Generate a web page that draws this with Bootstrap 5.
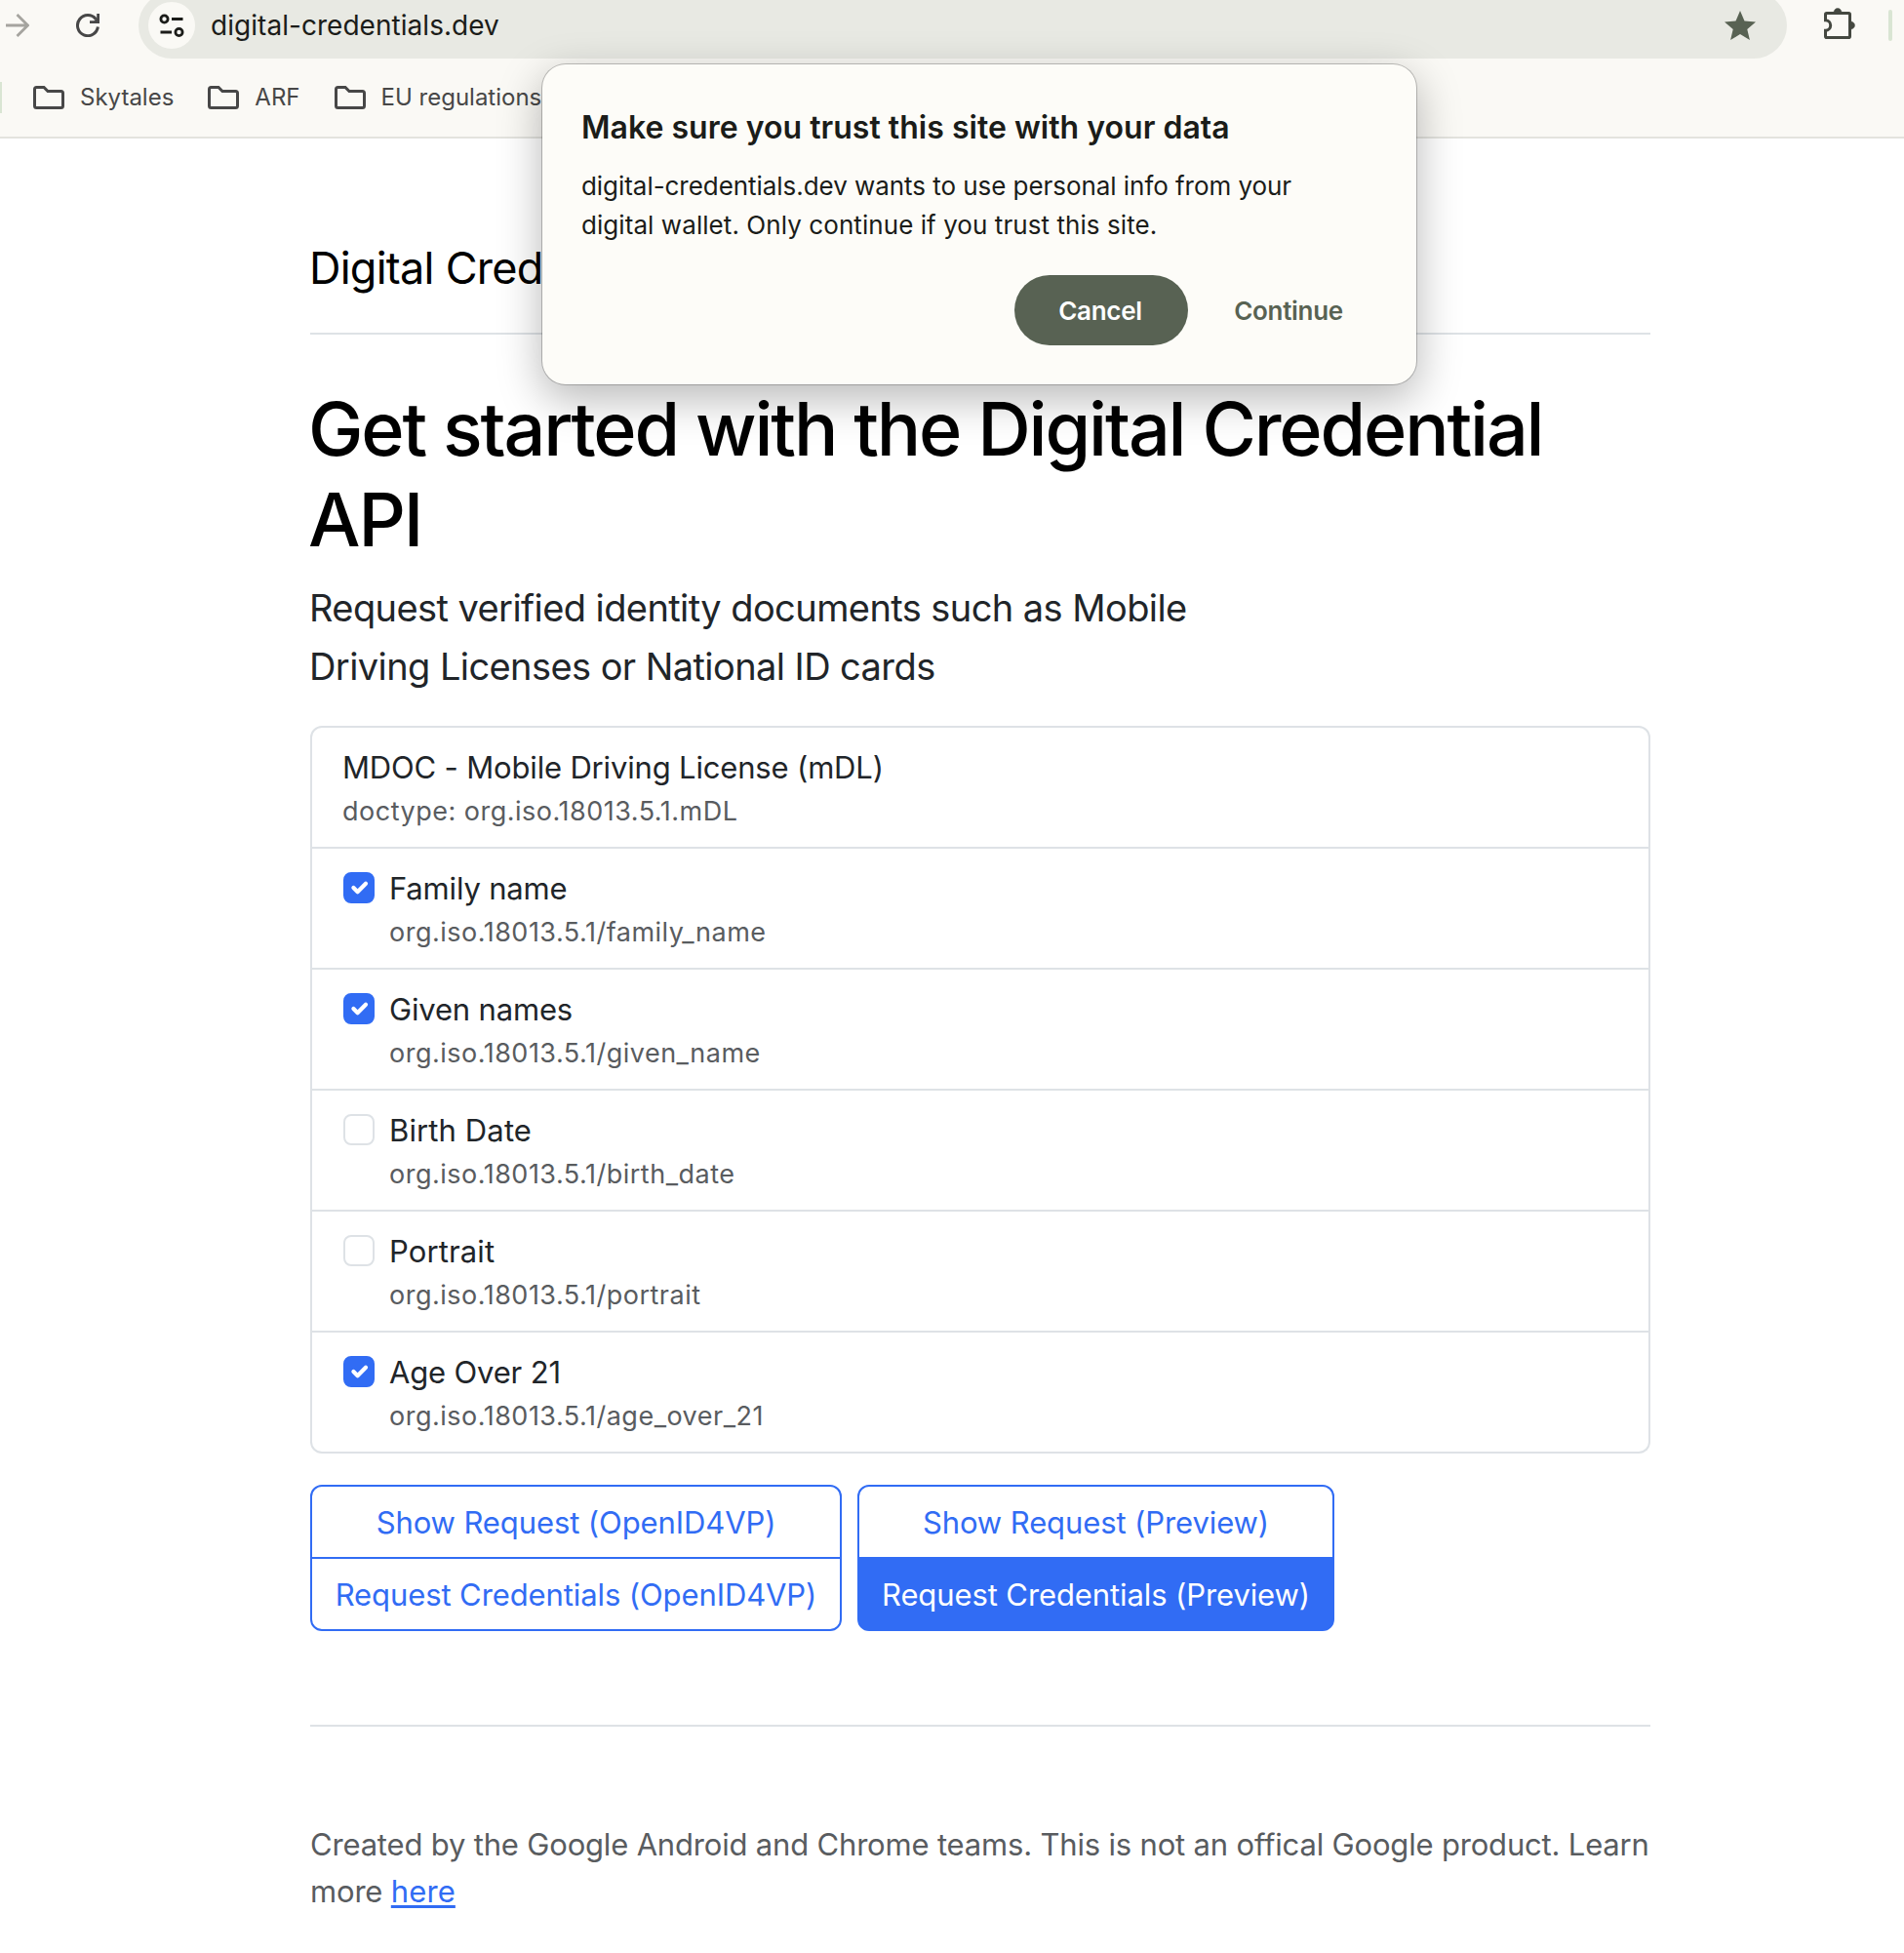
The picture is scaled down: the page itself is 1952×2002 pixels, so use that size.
<!DOCTYPE html>
<html lang="en">
<head>
<meta charset="utf-8">
<meta name="viewport" content="width=device-width, initial-scale=1">
<title>Digital Credentials</title>
<link href="https://cdn.jsdelivr.net/npm/bootstrap@5.3.0/dist/css/bootstrap.min.css" rel="stylesheet">
<style>
  /* Double-density page: one rem is 32px */
  html { font-size: 32px; }
  html, body { overflow: hidden; }
  body {
    --bs-border-width: 2px;
    --line: #dee2e6;
    --brand: #316cf4;
    --ink: #212529;
    --leaf: #586253;
    font-family: Inter, "Liberation Sans", sans-serif;
    font-size: 31px; line-height: 48px; letter-spacing: -.17px;
    color: var(--ink); background: #fff; height: 2002px;
  }
  svg { display: block; flex: none; }

  /* Browser toolbar */
  .chrome-bar { height: 142px; background: #faf9f5; border-bottom: 2px solid #e3e3de; }
  .tool-row { height: 60px; }
  .tool-row > svg:first-child { margin: 0 48px 8px 6px; }
  .tool-row > .reload { margin: 0 40px 8px 0; }
  .omnibox { width: 1690px; height: 68px; margin-top: -8px; padding: 0 32px 0 10px; background: #e8e9e3; color: #1b1c19; font-size: 28px; letter-spacing: .04px; }
  .site-info { width: 48px; height: 48px; background: #faf9f5; margin-right: 16px; }
  .ext { margin: 0 34px 12px 38px; }
  .tick { width: 4px; height: 32px; border-radius: 2px; background: #d9e5d3; margin-bottom: 8px; }
  .marks { height: 80px; font-size: 24px; letter-spacing: 0; line-height: 32px; color: #474747; }
  .marks .edge { width: 2px; height: 32px; background: #d9e5d3; margin-right: 32px; }
  .marks .fold { width: 32px; height: 24px; margin-right: 16px; }
  .mk { margin-right: 35px; }

  /* Trust prompt */
  .prompt { position: absolute; left: 556px; top: 66px; width: 896px; height: 328px; border-radius: 24px; background: #fdfcf8; color: #1b1c19;
    box-shadow: 0 0 0 1px rgba(0,0,0,.22), 0 14px 44px 2px rgba(0,0,0,.27); padding: 43px 26px 40px 40px; z-index: 10; }
  .prompt h2 { font-size: 32px; line-height: 44px; font-weight: 600; letter-spacing: .02px; margin: 0 0 18px; }
  .prompt p { font-size: 26px; line-height: 40px; letter-spacing: -.05px; margin: 0 0 31px; white-space: nowrap; }
  .prompt .l2 { letter-spacing: .07px; }
  .prompt .btn { height: 72px; font-size: 26px; border: 0; border-radius: 36px; letter-spacing: -.3px; padding: 1px 2px 0 0; font-weight: 600; }
  .btn-leaf { width: 178px; background: var(--leaf); color: #fff; }
  .prompt .btn-plain { width: 208px; color: var(--leaf); }

  /* Page */
  .page { width: 1374px; padding-top: 98px; margin-left: 318px; }
  .page-head { height: 103px; border-bottom: 2px solid var(--line); margin-bottom: 48px; color: #000; }
  .page-head span { font-size: 45px; line-height: 69px; letter-spacing: -.75px; white-space: nowrap; margin-left: -1px; }
  .hero { font-size: 75.5px; line-height: 93px; font-weight: 500; letter-spacing: -2.15px; color: #000; margin: 0 0 14px -2px; padding-top: 2px; }
  .sub { font-size: 38px; line-height: 60px; letter-spacing: -.58px; margin: 0 0 31px -1px; }
  .claims .list-group-item { color: var(--ink); border-color: var(--line); line-height: 48px; }
  .claims { border-radius: 12px; }
  .claims .list-group-item { height: 124px; }
  .claims .list-group-item:first-child { height: 126px; border-top-left-radius: 12px; border-top-right-radius: 12px; }
  .claims .list-group-item:last-child { border-bottom-left-radius: 12px; border-bottom-right-radius: 12px; }
  .claims .list-group-item + .list-group-item { border-top-width: 0; }
  .claims .name { display: block; margin-left: -1px; padding-top: 1px; }
  .claims .name.loose { letter-spacing: .12px; }
  .claims .path { display: block; font-size: 27px; line-height: 42px; letter-spacing: .5px; color: #595c5f; margin-left: -1px; }
  .claims .form-check-input { width: 32px; height: 32px; margin: 8px 0 0; border: 2px solid var(--line); border-radius: 8px; }
  .claims .form-check-input:checked { background-color: var(--brand); border-color: var(--brand); }
  .actions .btn { --bs-btn-color: var(--brand); --bs-btn-border-color: var(--brand); height: 76px; font-size: 31px; line-height: 48px; padding: 13px 0 11px; border-width: 2px; border-radius: 12px; letter-spacing: -.1px; }
  .actions .btn-primary { --bs-btn-color: #fff; --bs-btn-bg: var(--brand); }
  .actions .btn:first-child { border-bottom-left-radius: 0; border-bottom-right-radius: 0; }
  .actions .btn-group-vertical > .btn:last-child { border-top-left-radius: 0; border-top-right-radius: 0; margin-top: -2px; }
  .g-wide { width: 545px; }
  .g-slim { width: 489px; }
  .page-foot { margin-top: 96px; padding-top: 97px; border-top: 2px solid var(--line); color: #595c5f; letter-spacing: -.18px; white-space: nowrap; }
  .page-foot a { color: var(--brand); letter-spacing: .1px; text-decoration-thickness: 3px; text-underline-offset: 3px; }
</style>
</head>
<body>

<header class="chrome-bar">
  <div class="tool-row d-flex align-items-center">
    <svg width="24" height="24" viewBox="0 0 24 24" fill="none" stroke="#a5a49f" stroke-width="2.8"><path d="M0 12H22M11.500 1L22.500 12L11.500 23"/></svg>
    <svg class="reload" width="24" height="24" viewBox="0 0 24 24"><path d="M22.400 13.500A10.500 10.500 0 1 1 20.300 5.700" fill="none" stroke="#474747" stroke-width="3"/><path d="M21.200 0H24V10H14V7.200H18.500L21.200 4.500Z" fill="#474747"/></svg>
    <div class="omnibox rounded-pill d-flex align-items-center">
      <span class="site-info rounded-circle d-flex align-items-center justify-content-center">
        <svg width="26" height="24" viewBox="0 0 26 24" fill="none" stroke="#1b1c19" stroke-width="2.800"><circle cx="5.500" cy="5.500" r="3.600"/><path d="M13 5.500H24.500M1.500 19H13"/><circle cx="20.500" cy="19" r="3.600"/></svg>
      </span>
      <span class="flex-grow-1">digital-credentials.dev</span>
      <svg width="32" height="30" viewBox="2 2 20 19" preserveAspectRatio="none" fill="#586253"><path d="M12 17.270L18.180 21l-1.640-7.030L22 9.240l-7.190-.61L12 2 9.190 8.630 2 9.240l5.460 4.730L5.820 21z"/></svg>
    </div>
    <svg class="ext" width="32" height="32" viewBox="0 0 32 32"><path d="M1.500 6.800Q1.500 5.500 2.800 5.500H25.200Q26.500 5.500 26.500 6.800V29.200Q26.500 30.500 25.200 30.500H2.800Q1.500 30.500 1.500 29.200V23.200A5.200 5.200 0 0 0 1.500 12.800Z" fill="none" stroke="#444840" stroke-width="3"/><path d="M10 5A4 4.500 0 0 1 18 5ZM27 14A4.500 4 0 0 1 27 22Z" fill="#444840" stroke="#444840" stroke-width=".5"/></svg>
    <span class="tick"></span>
  </div>
  <div class="marks d-flex align-items-center">
    <span class="edge"></span>
    <svg class="fold" viewBox="0 0 32 24"><path d="M3.500 1.500H11L15 5.500H28.500Q30.500 5.500 30.500 7.500V20.500Q30.500 22.500 28.500 22.500H3.500Q1.500 22.500 1.500 20.500V3.500Q1.500 1.500 3.500 1.500Z" fill="none" stroke="#474747" stroke-width="3"/></svg><span class="mk">Skytales</span>
    <svg class="fold" viewBox="0 0 32 24"><path d="M3.500 1.500H11L15 5.500H28.500Q30.500 5.500 30.500 7.500V20.500Q30.500 22.500 28.500 22.500H3.500Q1.500 22.500 1.500 20.500V3.500Q1.500 1.500 3.500 1.500Z" fill="none" stroke="#474747" stroke-width="3"/></svg><span class="mk">ARF</span>
    <svg class="fold" viewBox="0 0 32 24"><path d="M3.500 1.500H11L15 5.500H28.500Q30.500 5.500 30.500 7.500V20.500Q30.500 22.500 28.500 22.500H3.500Q1.500 22.500 1.500 20.500V3.500Q1.500 1.500 3.500 1.500Z" fill="none" stroke="#474747" stroke-width="3"/></svg><span>EU regulations</span>
  </div>
</header>

<section class="prompt" role="dialog">
  <h2>Make sure you trust this site with your data</h2>
  <p>digital-credentials.dev wants to use personal info from your<br><span class="l2">digital wallet. Only continue if you trust this site.</span></p>
  <div class="d-flex justify-content-end">
    <button class="btn btn-leaf" type="button">Cancel</button>
    <button class="btn btn-plain" type="button">Continue</button>
  </div>
</section>

<main class="page">
  <div class="page-head"><span>Digital Cred</span></div>
  <h1 class="hero">Get started with the Digital Credential<br>API</h1>
  <p class="sub">Request verified identity documents such as Mobile<br>Driving Licenses or National ID cards</p>

  <div class="list-group claims mb-3">
    <div class="list-group-item">
      <span class="name">MDOC - Mobile Driving License (mDL)</span>
      <span class="path">doctype: org.iso.18013.5.1.mDL</span>
    </div>
    <label class="list-group-item d-flex gap-2">
      <input class="form-check-input flex-shrink-0" type="checkbox" checked>
      <span><span class="name">Family name</span><span class="path">org.iso.18013.5.1/family_name</span></span>
    </label>
    <label class="list-group-item d-flex gap-2">
      <input class="form-check-input flex-shrink-0" type="checkbox" checked>
      <span><span class="name">Given names</span><span class="path">org.iso.18013.5.1/given_name</span></span>
    </label>
    <label class="list-group-item d-flex gap-2">
      <input class="form-check-input flex-shrink-0" type="checkbox">
      <span><span class="name loose">Birth Date</span><span class="path">org.iso.18013.5.1/birth_date</span></span>
    </label>
    <label class="list-group-item d-flex gap-2">
      <input class="form-check-input flex-shrink-0" type="checkbox">
      <span><span class="name loose">Portrait</span><span class="path">org.iso.18013.5.1/portrait</span></span>
    </label>
    <label class="list-group-item d-flex gap-2">
      <input class="form-check-input flex-shrink-0" type="checkbox" checked>
      <span><span class="name">Age Over 21</span><span class="path">org.iso.18013.5.1/age_over_21</span></span>
    </label>
  </div>

  <div class="actions d-flex gap-2">
    <div class="btn-group-vertical g-wide">
      <button class="btn btn-outline-primary" type="button">Show Request (OpenID4VP)</button>
      <button class="btn btn-outline-primary" type="button">Request Credentials (OpenID4VP)</button>
    </div>
    <div class="btn-group-vertical g-slim">
      <button class="btn btn-outline-primary" type="button">Show Request (Preview)</button>
      <button class="btn btn-primary" type="button">Request Credentials (Preview)</button>
    </div>
  </div>

  <footer class="page-foot">Created by the Google Android and Chrome teams. This is not an offical Google product. Learn<br>more <a href="#">here</a></footer>
</main>

<script src="https://cdn.jsdelivr.net/npm/bootstrap@5.3.0/dist/js/bootstrap.bundle.min.js"></script>
</body>
</html>
